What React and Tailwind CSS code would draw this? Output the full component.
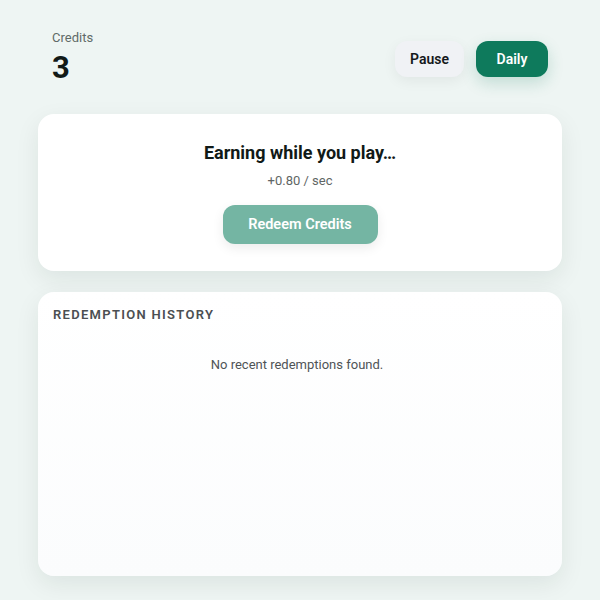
import React from 'react';

const history = [];

const App = () => {
  return (
    <div className="min-h-screen bg-[#eef5f3] px-[38px] pt-[30px] pb-6 font-['Roboto',sans-serif]">
      {/* header */}
      <div className="flex items-center justify-between px-[14px]">
        <div>
          <p className="text-[13px] leading-4 text-[#5f6b68]">Credits</p>
          <p className="mt-[6px] text-[31px] leading-8 font-bold text-[#111a17]">3</p>
        </div>
        <div className="flex items-center gap-3 mt-[4px]">
          <button className="h-9 px-[15px] rounded-xl bg-[#f0f2f5] text-[14px] font-semibold text-[#15191b] shadow-[0_4px_14px_rgba(0,0,0,0.06)]">
            Pause
          </button>
          <button className="h-9 w-[72px] rounded-xl bg-[#0e7a5c] text-[14px] font-semibold text-white shadow-[0_6px_16px_rgba(14,122,92,0.2)]">
            Daily
          </button>
        </div>
      </div>

      {/* earning card */}
      <div className="mt-[30px] rounded-2xl bg-white shadow-[0_8px_24px_rgba(0,40,30,0.08)] pt-[27px] pb-[27px] flex flex-col items-center">
        <h2 className="text-[18px] leading-6 font-bold text-[#111a17]">Earning while you play…</h2>
        <p className="mt-[6px] text-[13px] leading-5 text-[#5f6665]">+0.80 / sec</p>
        <button className="mt-[14px] h-[39px] w-[155px] rounded-xl bg-[#74b5a3] text-[14.5px] font-semibold text-white shadow-[0_4px_12px_rgba(0,0,0,0.08)]">
          Redeem Credits
        </button>
      </div>

      {/* history card */}
      <div className="mt-[21px] h-[284px] rounded-2xl bg-gradient-to-b from-white to-[#fbfcfd] shadow-[0_8px_24px_rgba(0,40,30,0.08)] px-[15px] pt-[13px]">
        <h3 className="text-[13px] leading-5 font-semibold tracking-[0.1em] text-[#4b4f52]">REDEMPTION HISTORY</h3>
        {history.length === 0 && (
          <p className="mt-[30px] pr-[6px] text-center text-[13px] leading-5 text-[#4f5356]">No recent redemptions found.</p>
        )}
      </div>
    </div>
  );
};

export default App;
